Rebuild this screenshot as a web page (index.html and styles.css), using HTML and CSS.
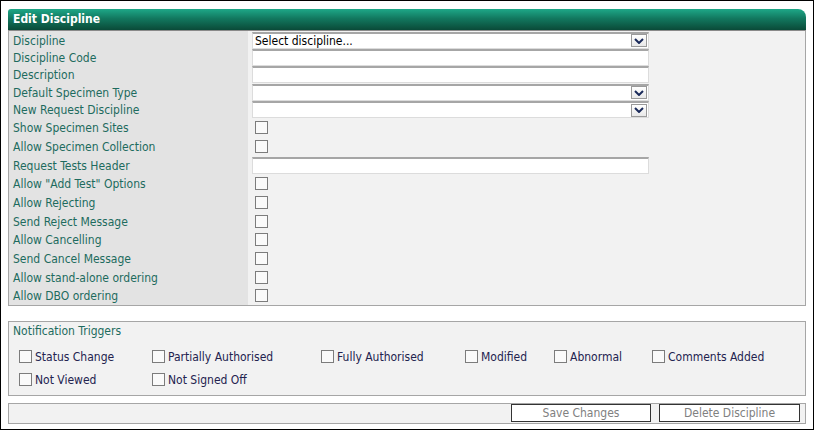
FILE: index.html
```html
<!DOCTYPE html>
<html>
<head>
<meta charset="utf-8">
<link rel="stylesheet" href="styles.css">
</head>
<body>
<div class="page">
  <div class="panel">
    <div class="panel-head">Edit Discipline</div>
    <div class="form">
      <div class="row r-in"><div class="lbl">Discipline</div><div class="val"><div class="input select"><span class="sel-text">Select discipline...</span><span class="dd"><svg width="10" height="6" viewBox="0 0 10 6"><path d="M1 1 L5 5 L9 1" fill="none" stroke="#1a2a5a" stroke-width="2"/></svg></span></div></div></div>
      <div class="row r-in"><div class="lbl">Discipline Code</div><div class="val"><div class="input"></div></div></div>
      <div class="row r-in"><div class="lbl">Description</div><div class="val"><div class="input"></div></div></div>
      <div class="row r-in"><div class="lbl">Default Specimen Type</div><div class="val"><div class="input select"><span class="sel-text"></span><span class="dd"><svg width="10" height="6" viewBox="0 0 10 6"><path d="M1 1 L5 5 L9 1" fill="none" stroke="#1a2a5a" stroke-width="2"/></svg></span></div></div></div>
      <div class="row r-in"><div class="lbl">New Request Discipline</div><div class="val"><div class="input select"><span class="sel-text"></span><span class="dd"><svg width="10" height="6" viewBox="0 0 10 6"><path d="M1 1 L5 5 L9 1" fill="none" stroke="#1a2a5a" stroke-width="2"/></svg></span></div></div></div>
      <div class="row r-cb"><div class="lbl">Show Specimen Sites</div><div class="val"><span class="cb"></span></div></div>
      <div class="row r-cb"><div class="lbl">Allow Specimen Collection</div><div class="val"><span class="cb"></span></div></div>
      <div class="row r-cb"><div class="lbl">Request Tests Header</div><div class="val"><div class="input"></div></div></div>
      <div class="row r-cb"><div class="lbl">Allow "Add Test" Options</div><div class="val"><span class="cb"></span></div></div>
      <div class="row r-cb"><div class="lbl">Allow Rejecting</div><div class="val"><span class="cb"></span></div></div>
      <div class="row r-cb"><div class="lbl">Send Reject Message</div><div class="val"><span class="cb"></span></div></div>
      <div class="row r-cb"><div class="lbl">Allow Cancelling</div><div class="val"><span class="cb"></span></div></div>
      <div class="row r-cb"><div class="lbl">Send Cancel Message</div><div class="val"><span class="cb"></span></div></div>
      <div class="row r-cb"><div class="lbl">Allow stand-alone ordering</div><div class="val"><span class="cb"></span></div></div>
      <div class="row r-cb"><div class="lbl">Allow DBO ordering</div><div class="val"><span class="cb"></span></div></div>
    </div>
  </div>

  <div class="notif">
    <div class="notif-title">Notification Triggers</div>
    <div class="notif-grid">
      <label class="opt"><span class="cb"></span>Status Change</label>
      <label class="opt"><span class="cb"></span>Partially Authorised</label>
      <label class="opt"><span class="cb"></span>Fully Authorised</label>
      <label class="opt"><span class="cb"></span>Modified</label>
      <label class="opt"><span class="cb"></span>Abnormal</label>
      <label class="opt"><span class="cb"></span>Comments Added</label>
      <label class="opt"><span class="cb"></span>Not Viewed</label>
      <label class="opt"><span class="cb"></span>Not Signed Off</label>
    </div>
  </div>

  <div class="actions">
    <button class="btn btn-save">Save Changes</button>
    <button class="btn btn-del">Delete Discipline</button>
  </div>
</div>
</body>
</html>
```
FILE: styles.css
```css
html, body {
  margin: 0;
  padding: 0;
}
body {
  width: 814px;
  height: 430px;
  box-sizing: border-box;
  border: 1px solid #000;
  background: #fff;
  font-family: "DejaVu Sans Condensed", "DejaVu Sans", sans-serif;
  font-size: 12px;
  overflow: hidden;
}
.page {
  padding: 8px 7px 0 7px;
}
.panel-head {
  height: 21px;
  background: linear-gradient(to bottom, #1ea888 0%, #12785f 45%, #0a4a38 100%);
  border-radius: 3px 8px 0 0;
  color: #fff;
  font-weight: bold;
  font-size: 12px;
  line-height: 21px;
  padding-left: 5px;
}
.form {
  border: 1px solid #a6a6a6;
  border-top: 1px solid #8a8a8a;
  background: #f2f2f2;
}
.row {
  display: flex;
  align-items: center;
}
.r-in { height: 17.4px; }
.r-cb { height: 18.7px; }
.lbl {
  width: 235px;
  align-self: stretch;
  background: #e3e3e3;
  color: #1d6b5e;
  padding-left: 4px;
  padding-top: 2px;
  box-sizing: content-box;
  display: flex;
  align-items: center;
  margin-right: 4px;
}
.val {
  flex: 1;
  display: flex;
  align-items: center;
  padding-top: 1px;
}
.input {
  width: 395px;
  height: 14px;
  background: #fff;
  border: 1px solid #dcdcdc;
  border-top: 2px solid #a6a6a6;
  display: flex;
  align-items: center;
  justify-content: space-between;
}
.sel-text {
  color: #000;
  padding-left: 2px;
  font-size: 12px;
}
.dd {
  width: 16px;
  height: 13px;
  margin-right: 1px;
  background: linear-gradient(#ffffff, #e8e8e8);
  border: 1px solid #9a9a9a;
  box-sizing: border-box;
  display: flex;
  align-items: center;
  justify-content: center;
}
.cb {
  display: inline-block;
  width: 13px;
  height: 13px;
  box-sizing: border-box;
  border: 1px solid #7c7c7c;
  background: #fafafa;
  margin-left: 3px;
}
.notif {
  margin-top: 15px;
  border: 1px solid #a6a6a6;
  background: #f2f2f2;
  height: 75px;
  box-sizing: border-box;
}
.notif-title {
  color: #1d6b5e;
  padding: 2px 0 0 4px;
  height: 17px;
  line-height: 15px;
}
.notif-grid {
  display: grid;
  grid-template-columns: 133px 169px 144px 89px 98px auto;
  padding-left: 10px;
  padding-top: 7px;
  row-gap: 5px;
}
.opt {
  display: flex;
  align-items: center;
  color: #23234f;
  height: 18px;
  font-size: 12px;
}
.opt .cb {
  margin-left: 0;
  margin-right: 3px;
}
.actions {
  margin-top: 7px;
  height: 21px;
  box-sizing: border-box;
  border: 1px solid #a6a6a6;
  background: #f2f2f2;
  display: flex;
  justify-content: flex-end;
  align-items: flex-start;
  gap: 8px;
  padding-right: 5px;
}
.btn {
  font-family: inherit;
  font-size: 12px;
  color: #808080;
  background: #fff;
  border: 1px solid #333;
  height: 18px;
  padding: 0;
  margin: 0;
  line-height: 16px;
}
.btn-save { width: 140px; }
.btn-del { width: 141px; }
```
